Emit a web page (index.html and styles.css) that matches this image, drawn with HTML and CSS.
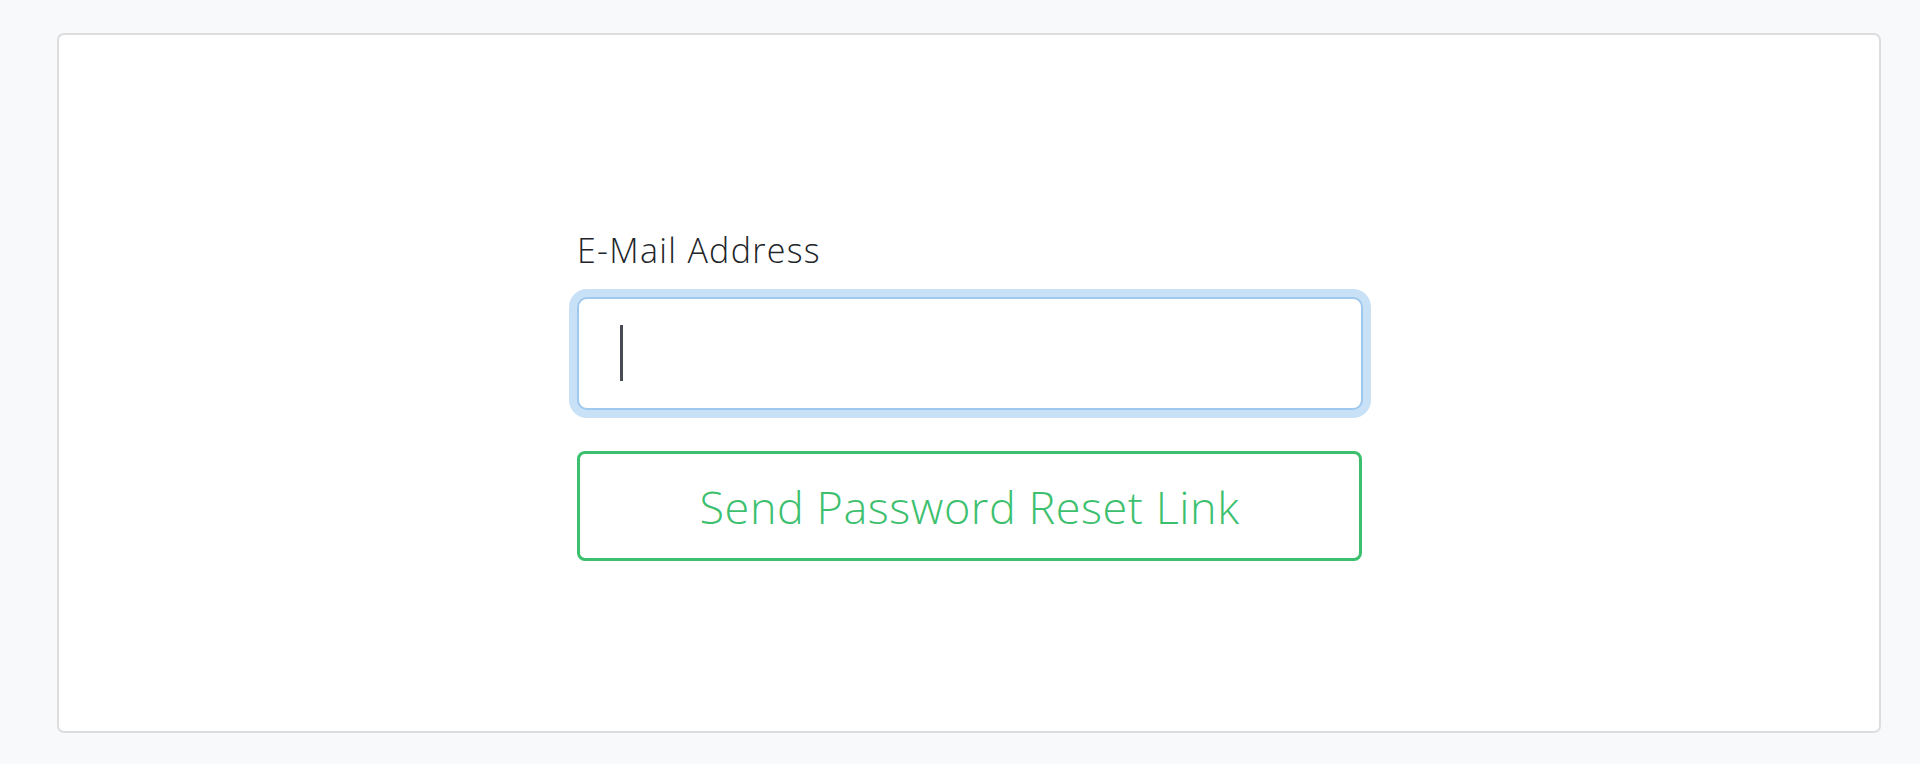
FILE: index.html
```html
<!DOCTYPE html>
<html lang="en">
<head>
<meta charset="utf-8">
<title>Reset Password</title>
<link rel="stylesheet" href="styles.css">
</head>
<body>
<div class="page">
  <main class="card">
    <form class="reset-form">
      <label class="field-label" for="email">E-Mail Address</label>
      <div class="input-wrap">
        <input class="field-input is-focused" id="email" type="email" name="email">
        <span class="caret"></span>
      </div>
      <button class="btn-send" type="button">Send Password Reset Link</button>
    </form>
  </main>
</div>
</body>
</html>
```
FILE: styles.css
```css
html, body {
  margin: 0;
  padding: 0;
  background: #f8f9fa;
}
.page {
  display: flex;
  padding: 33px 0 31px 57px;
  font-family: "Open Sans", "Lato", sans-serif;
  font-weight: 300;
}
.card {
  box-sizing: border-box;
  flex: none;
  width: 1824px;
  height: 700px;
  background: #ffffff;
  border: 2px solid #dcdddf;
  border-radius: 7px;
  display: flex;
  justify-content: center;
  align-items: flex-start;
  padding-top: 195px;
}
.reset-form {
  width: 786px;
  display: flex;
  flex-direction: column;
  margin-left: 2px;
}
.field-label {
  font-size: 34px;
  line-height: 40px;
  letter-spacing: 1.3px;
  color: #212529;
  margin-bottom: 27px;
}
.input-wrap {
  position: relative;
  height: 113px;
}
.field-input {
  box-sizing: border-box;
  width: 100%;
  height: 113px;
  border: 2px solid #9fc8ef;
  border-radius: 10px;
  outline: none;
  background: #fff;
  font-family: inherit;
  font-size: 44px;
  padding: 0 40px;
}
.field-input.is-focused {
  box-shadow: 0 0 0 8px #c9e1f6;
}
.caret {
  position: absolute;
  left: 43px;
  top: 28px;
  width: 3px;
  height: 56px;
  background: #474c54;
}
.btn-send {
  box-sizing: border-box;
  margin-top: 41px;
  width: 785px;
  height: 110px;
  border: 3px solid #3cc06e;
  border-radius: 8px;
  background: #fff;
  color: #3cc06e;
  font-family: inherit;
  font-weight: 300;
  font-size: 45px;
  letter-spacing: 0.55px;
  padding: 0;
  cursor: pointer;
}
```
